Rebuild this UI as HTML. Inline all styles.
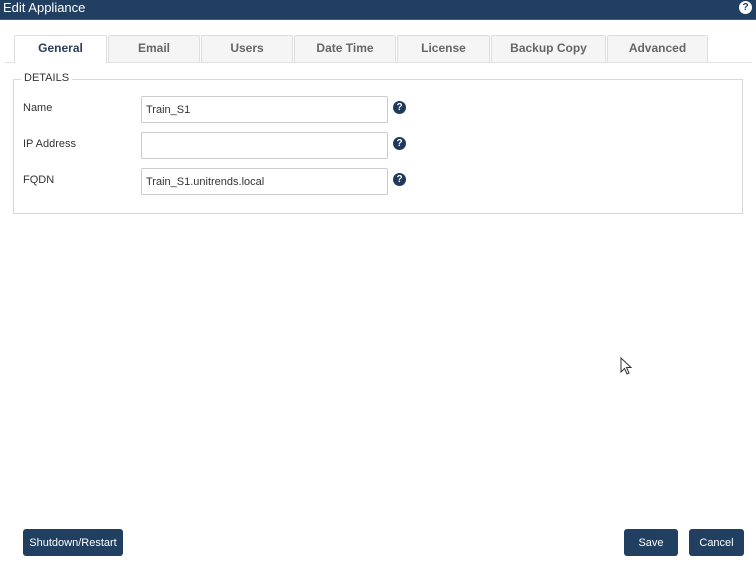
<!DOCTYPE html>
<html><head><style>
*{box-sizing:border-box;margin:0;padding:0}
body{width:756px;height:565px;background:#fff;font-family:"Liberation Sans",sans-serif;position:relative;overflow:hidden;color:#333}
.hdr{position:absolute;left:0;top:0;width:756px;height:20px;background:#203f61;color:#fff;font-size:13px;line-height:15px;padding-left:3px;border-bottom:1px solid #3a5d86}
.q{position:absolute;width:13px;height:13px;border-radius:50%;background:#1f3a5c;color:#fff;font-size:10px;font-weight:bold;text-align:center;line-height:13px}
.tab{position:absolute;top:35px;height:27px;background:#f5f5f5;border:1px solid #ddd;border-bottom:none;font-size:12px;font-weight:bold;color:#666;text-align:center;line-height:24px;border-radius:2px 2px 0 0}
.tab.a{background:#fff;color:#2b3e55;height:28px}
.line{position:absolute;left:5px;top:62px;width:747px;height:1px;background:#e3e3e3}
.fs{position:absolute;left:13px;top:79px;width:730px;height:135px;border:1px solid #d8d8d8}
.lg{position:absolute;left:21px;top:72px;background:#fff;padding:0 3px;font-size:11px;color:#333}
.lb{position:absolute;left:23px;font-size:11px;color:#333}
.in{position:absolute;left:141px;width:247px;height:27px;border:1px solid #ccc;border-radius:2px;font-size:11px;padding-left:4px;line-height:26px;color:#333}
.btn{position:absolute;top:529px;height:27px;background:#203f61;color:#fff;font-size:11px;text-align:center;line-height:29px;border-radius:3px}
</style></head><body>
<div class="hdr">Edit Appliance</div>
<div class="q" style="left:739px;top:1px;background:#fff;color:#203f61">?</div>
<div class="line"></div>
<div class="tab a" style="left:14px;width:93px">General</div>
<div class="tab" style="left:108px;width:92px">Email</div>
<div class="tab" style="left:201px;width:92px">Users</div>
<div class="tab" style="left:294px;width:102px">Date Time</div>
<div class="tab" style="left:397px;width:93px">License</div>
<div class="tab" style="left:491px;width:115px">Backup Copy</div>
<div class="tab" style="left:607px;width:101px">Advanced</div>
<div class="fs"></div>
<div class="lg">DETAILS</div>
<div class="lb" style="top:102px">Name</div>
<div class="in" style="top:96px">Train_S1</div>
<div class="q" style="left:393px;top:101px">?</div>
<div class="lb" style="top:138px">IP Address</div>
<div class="in" style="top:132px"></div>
<div class="q" style="left:393px;top:137px">?</div>
<div class="lb" style="top:174px">FQDN</div>
<div class="in" style="top:168px">Train_S1.unitrends.local</div>
<div class="q" style="left:393px;top:173px">?</div>
<svg style="position:absolute;left:620px;top:357px" width="12" height="19" viewBox="0 0 12 19"><path d="M1 1 L1 15 L4.5 11.5 L7 17 L9 16 L6.5 10.5 L11 10.5 Z" fill="#fff" stroke="#333" stroke-width="1"/></svg>
<div class="btn" style="left:23px;width:100px">Shutdown/Restart</div>
<div class="btn" style="left:624px;width:54px">Save</div>
<div class="btn" style="left:689px;width:55px">Cancel</div>
</body></html>
